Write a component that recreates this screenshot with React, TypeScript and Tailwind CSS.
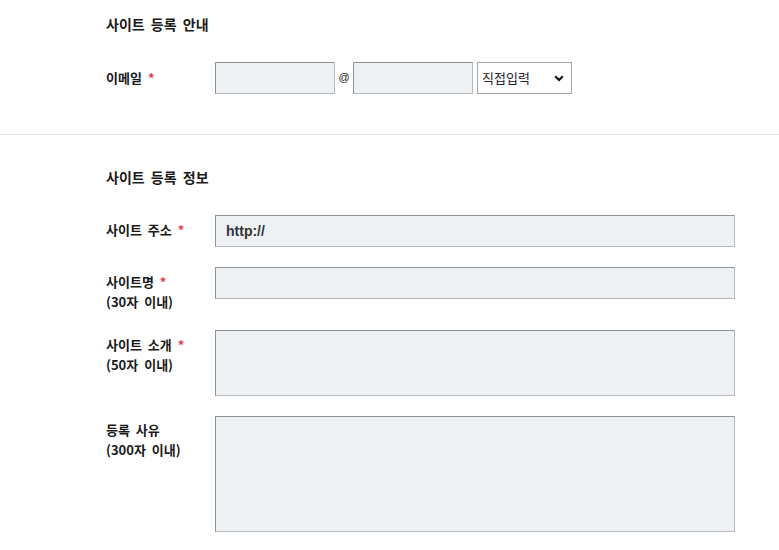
import React from 'react';

const FIELD =
  'block bg-[#eef1f4] border border-t-[#8f9399] border-l-[#8f9399] border-b-[#b5b9be] border-r-[#b5b9be] outline-none';

const LABEL = 'w-[109px] text-[13px] leading-[20px] font-bold [word-spacing:3px]';

const Req = () => <span className="ml-[6px] text-[#e53950] font-bold">*</span>;

const App: React.FC = () => {
  return (
    <div className="w-[779px] min-h-[550px] bg-white text-[#1a1a1a] font-['Noto_Sans_CJK_KR','Noto_Sans',sans-serif]">
      {/* 사이트 등록 안내 */}
      <section className="pl-[106px] pt-[14px] pb-[40px] border-b border-[#e2e2e2]">
        <h2 className="text-[14px] leading-[20px] font-bold [word-spacing:3px]">사이트 등록 안내</h2>

        <div className="mt-[28px] flex items-start">
          <label className={`${LABEL} pt-[6px]`}>
            이메일
            <Req />
          </label>
          <input type="text" className={`${FIELD} w-[120px] h-[32px]`} />
          <span className="w-[18px] pt-[8px] text-center text-[11px] leading-[14px] font-['Liberation_Sans',sans-serif]">@</span>
          <input type="text" className={`${FIELD} w-[120px] h-[32px]`} />
          <div className="relative ml-[4px] w-[95px] h-[32px]">
            <select
              defaultValue="direct"
              className="appearance-none w-full h-full bg-white border border-[#a7a7a7] pl-[4px] text-[13px] text-[#222] outline-none"
            >
              <option value="direct">직접입력</option>
              <option value="naver">naver.com</option>
              <option value="gmail">gmail.com</option>
            </select>
            <svg
              className="pointer-events-none absolute right-[8px] top-[13px]"
              width="10"
              height="7"
              viewBox="0 0 10 7"
            >
              <polyline points="1.2,1.2 5,5 8.8,1.2" fill="none" stroke="#111" strokeWidth="2.2" />
            </svg>
          </div>
        </div>
      </section>

      {/* 사이트 등록 정보 */}
      <section className="pl-[106px] pt-[32px] pb-[18px]">
        <h2 className="text-[14px] leading-[20px] font-bold [word-spacing:3px]">사이트 등록 정보</h2>

        <div className="mt-[28px] flex items-start">
          <label className={`${LABEL} pt-[5px]`}>
            사이트 주소
            <Req />
          </label>
          <input
            type="text"
            defaultValue="http://"
            className={`${FIELD} w-[520px] h-[32px] pl-[10px] text-[14px] font-bold text-[#333] font-['Liberation_Sans',sans-serif]`}
          />
        </div>

        <div className="mt-[20px] flex items-start">
          <label className={`${LABEL} pt-[5px]`}>
            사이트명
            <Req />
            <br />
            (30자 이내)
          </label>
          <input type="text" className={`${FIELD} w-[520px] h-[32px]`} />
        </div>

        <div className="mt-[18px] flex items-start">
          <label className={`${LABEL} pt-[5px]`}>
            사이트 소개
            <Req />
            <br />
            (50자 이내)
          </label>
          <textarea className={`${FIELD} w-[520px] h-[66px] resize-none`} />
        </div>

        <div className="mt-[20px] flex items-start">
          <label className={`${LABEL} pt-[4px]`}>
            등록 사유
            <br />
            (300자 이내)
          </label>
          <textarea className={`${FIELD} w-[520px] h-[116px] resize-none`} />
        </div>
      </section>
    </div>
  );
};

export default App;
